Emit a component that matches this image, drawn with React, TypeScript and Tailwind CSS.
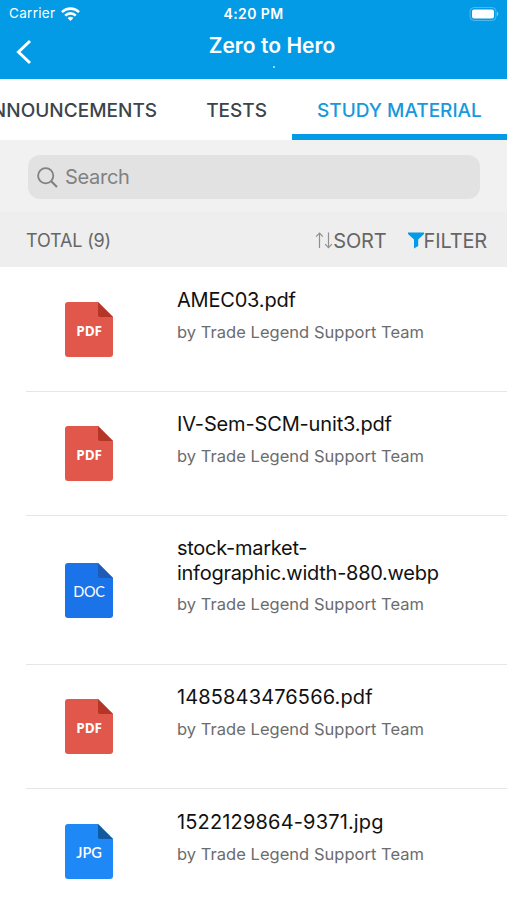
interface Material {
  name: string;
  kind: 'PDF' | 'DOC' | 'JPG';
  tracking: string;
  height: string;
}

const materials: Material[] = [
  { name: 'AMEC03.pdf', kind: 'PDF', tracking: 'tracking-[-0.2px]', height: 'h-[125px]' },
  { name: 'IV-Sem-SCM-unit3.pdf', kind: 'PDF', tracking: 'tracking-[-0.15px]', height: 'h-[124px]' },
  { name: 'stock-market-infographic.width-880.webp', kind: 'DOC', tracking: 'tracking-[-0.27px]', height: 'h-[149px]' },
  { name: '1485843476566.pdf', kind: 'PDF', tracking: 'tracking-[0.13px]', height: 'h-[124px]' },
  { name: '1522129864-9371.jpg', kind: 'JPG', tracking: 'tracking-[0.16px]', height: 'h-[125px]' },
];

const fileStyles = {
  PDF: { body: '#e2574c', fold: '#b53629', text: "text-[13.5px] font-bold tracking-[-0.2px] font-['Open_Sans',sans-serif]" },
  DOC: { body: '#1a73e8', fold: '#1f5bb5', text: "text-[14.5px] font-normal tracking-[-0.2px] font-['Lato',sans-serif]" },
  JPG: { body: '#1e88f7', fold: '#125a9e', text: "text-[14.5px] font-semibold font-['Lato',sans-serif]" },
};

function FileIcon({ kind }: { kind: Material['kind'] }) {
  const style = fileStyles[kind];
  return (
    <div className="relative flex h-[55px] w-12 shrink-0 items-center justify-center">
      <svg className="absolute inset-0" width="48" height="55" viewBox="0 0 48 55">
        <path d="M3 0H33L48 15V52a3 3 0 0 1-3 3H3a3 3 0 0 1-3-3V3a3 3 0 0 1 3-3Z" fill={style.body} />
        <path d="M33 0L48 15H35a2 2 0 0 1-2-2Z" fill={style.fold} />
      </svg>
      <span className={`relative mt-[5px] leading-none text-white ${style.text}`}>{kind}</span>
    </div>
  );
}

function StatusBar() {
  return (
    <div className="grid h-[27px] grid-cols-3 items-center px-[9px] text-[13.5px] leading-none">
      <div className="flex items-center gap-[6px]">
        <span className="tracking-[0.3px]">Carrier</span>
        <svg width="19" height="14" viewBox="0 0 19 14" fill="none" stroke="white" strokeWidth="2.6">
          <path d="M1 5.2a12 12 0 0 1 17 0" />
          <path d="M4.2 8.6a7.5 7.5 0 0 1 10.6 0" />
          <path d="M9.5 14L6.6 11.1a4.1 4.1 0 0 1 5.8 0Z" fill="white" stroke="none" />
        </svg>
      </div>
      <span className="whitespace-nowrap pt-px text-center text-[14px] font-semibold tracking-[0.4px]">4:20 PM</span>
      <svg className="-mr-[1px] justify-self-end" width="30" height="14" viewBox="0 0 30 14">
        <rect x="1" y="0.5" width="26" height="13" rx="4" fill="none" stroke="white" strokeOpacity="0.3" />
        <rect x="3" y="2.5" width="22" height="9" rx="2" fill="white" />
        <path d="M28 4.8v4.4c1.8-.6 1.8-3.8 0-4.4Z" fill="white" fillOpacity="0.45" />
      </svg>
    </div>
  );
}

function Header() {
  return (
    <header className="h-[79px] shrink-0 bg-[#039be5] text-white">
      <StatusBar />
      <div className="grid h-[50px] grid-cols-[38px_1fr_38px] items-center">
        <svg className="ml-[14px]" width="19" height="26" viewBox="0 0 19 26" fill="none" stroke="white" strokeWidth="3">
          <path d="M16 2L4.5 13L16 24" />
        </svg>
        <div className="relative -mt-[13px] ml-[37px] text-center text-[21px] font-semibold leading-6 tracking-[0.05px]">
          Zero to Hero
          <span className="absolute left-1/2 top-[32px] ml-[1px] h-[2px] w-[2px] rounded-full bg-white/80" />
        </div>
      </div>
    </header>
  );
}

function Tabs() {
  return (
    <nav className="flex h-[61px] shrink-0 justify-end overflow-hidden whitespace-nowrap bg-white text-[19px] font-medium text-[#3b444b]">
      <div className="flex shrink-0 items-center pr-[24px] pt-[3px] tracking-[0.03px]">ANNOUNCEMENTS</div>
      <div className="flex shrink-0 items-center px-[25px] pt-[3px]">TESTS</div>
      <div className="flex w-[215px] shrink-0 items-center border-b-[6px] border-[#039be5] pl-[25px] pt-[9px] text-[#1799dc]">
        STUDY MATERIAL
      </div>
    </nav>
  );
}

function Toolbar() {
  return (
    <div className="flex h-[55px] shrink-0 items-center justify-between bg-[#eeeeee] pl-[26px] pr-[20px] pt-[2px] text-[#666]">
      <span className="text-[18px] tracking-[-0.15px]">TOTAL (9)</span>
      <div className="flex items-center text-[20px] tracking-[-0.15px]">
        <svg width="18" height="18" viewBox="0 0 18 18" fill="none" stroke="#909090" strokeWidth="1.2">
          <path d="M4.5 16V1.5M1.1 4.6L4.5 1.2L7.9 4.6M13.5 0.5V15.5M10.1 12.2l3.4 3.4L16.9 12.2" />
        </svg>
        <span>SORT</span>
        <svg className="ml-[21px]" width="16" height="17" viewBox="0 0 16 17" fill="#039be5">
          <path d="M0 0.5H16V2L10.2 7.6V14L6 16.5V7.6L0 2Z" />
        </svg>
        <span>FILTER</span>
      </div>
    </div>
  );
}

export default function App() {
  return (
    <div className="flex h-[900px] w-[507px] flex-col overflow-hidden bg-white font-['Inter',sans-serif]">
      <Header />
      <Tabs />
      <div className="h-[72px] shrink-0 bg-[#f1f1f1] pl-[28px] pr-[27px] pt-[15px]">
        <div className="flex h-[44px] items-center rounded-[12px] bg-[#e2e2e2] pl-[9px] text-[20px] tracking-[-0.3px] text-[#818181]">
          <svg className="mr-[7px]" width="21" height="21" viewBox="0 0 21 21" fill="none" stroke="currentColor" strokeWidth="1.8">
            <circle cx="8.7" cy="8.7" r="7.6" />
            <path d="M14 14L20 20" strokeWidth="2.2" />
          </svg>
          Search
        </div>
      </div>
      <Toolbar />
      <ul className="pl-[26px]">
        {materials.map((item) => (
          <li key={item.name} className={`group flex items-center border-b border-[#e6e6e6] pl-[39px] ${item.height}`}>
            <FileIcon kind={item.kind} />
            <div className="ml-16 w-[270px] self-start pt-[20px] group-first:pt-[21px] group-last:pt-[21px]">
              <h3 className={`text-[20px] leading-[24.5px] text-[#111] ${item.tracking}`}>{item.name}</h3>
              <p className="mt-[8px] text-[16.5px] leading-[22px] tracking-[0.03px] text-[#6c6c6c]">by Trade Legend Support Team</p>
            </div>
          </li>
        ))}
      </ul>
    </div>
  );
}
